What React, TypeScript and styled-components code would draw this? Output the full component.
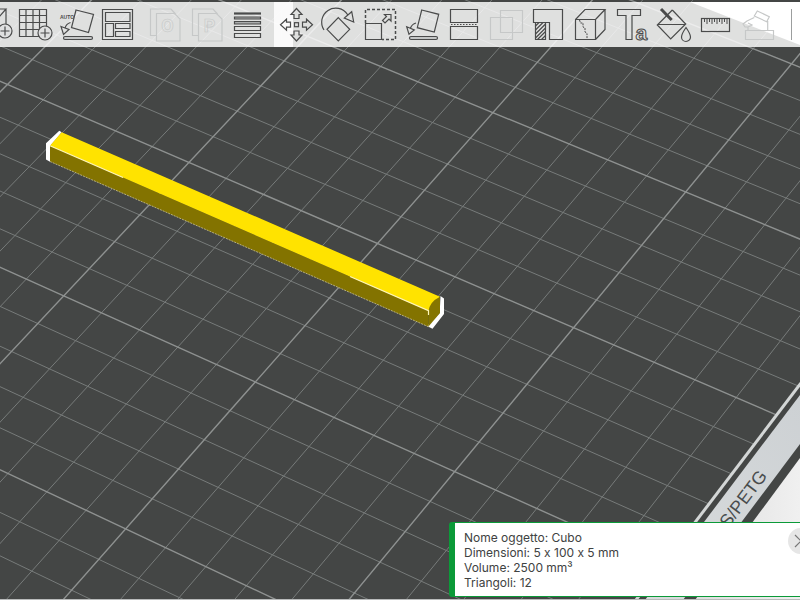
import React from "react";
import styled, { createGlobalStyle } from "styled-components";

const GlobalStyle = createGlobalStyle`
  *, *::before, *::after { box-sizing: border-box; }
  body {
    margin: 0;
    background: #444645;
    font-family: Inter, "Noto Sans", sans-serif;
    font-feature-settings: "calt" 0;
  }
`;

const Viewport = styled.main`
  position: relative;
  display: flex;
  flex-direction: column;
  justify-content: space-between;
  min-height: 100vh;
  padding: 2px 0 3px;
  overflow: hidden;
`;

const Scene = styled.svg`
  position: absolute;
  inset: 0;
  width: 100%;
  height: 100%;
`;

const Toolbars = styled.header`
  position: relative;
  display: flex;
  height: 45px;
`;

const Toolbar = styled.div<{ $side: "plate" | "object" }>`
  display: flex;
  align-items: center;
  flex: ${(p) => (p.$side === "plate" ? "0 0 293px" : "1 0 auto")};
  justify-content: ${(p) => (p.$side === "plate" ? "flex-end" : "flex-start")};
  min-width: 0;
  margin-right: ${(p) => (p.$side === "plate" ? "-19px" : "0")};
  padding: ${(p) => (p.$side === "plate" ? "0 11px 0 0" : "0 0 0 2px")};
  overflow: hidden;
  background: rgba(255, 255, 255, 0.83);
`;

const Tool = styled.button`
  flex: none;
  width: 42px;
  height: 45px;
  padding: 0;
  border: 0;
  background: none;
  color: #4a4b4b;
  cursor: pointer;

  &:disabled {
    color: #c6c8c8;
    cursor: default;
  }
`;

const Glyph = styled.svg`
  display: block;
  width: 42px;
  height: 45px;
  fill: none;
  stroke: currentColor;
  stroke-width: 1.2;
`;

const Separator = styled.span<{ $strong?: boolean }>`
  flex: none;
  width: 1px;
  height: 31px;
  margin-left: ${(p) => (p.$strong ? "11px" : "13px")};
  background: ${(p) => (p.$strong ? "#9c9e9e" : "#e2e3e3")};
`;

const InfoPanel = styled.aside`
  position: relative;
  display: flex;
  align-items: flex-start;
  align-self: flex-end;
  justify-content: space-between;
  width: 351px;
  max-width: 100%;
  padding: 7px 0 6px 9px;
  overflow: hidden;
  border: solid #0b9a38;
  border-width: 1px 0 1px 6px;
  border-radius: 3px 0 0 3px;
  background: #fff;
`;

const InfoList = styled.ul`
  margin: 0;
  padding: 0;
  list-style: none;
  color: #404242;
  font-size: 12px;
  line-height: 15px;
`;

const CloseButton = styled.button`
  flex: none;
  width: 26px;
  height: 26px;
  margin-right: -14px;
  margin-top: -2px;
  padding: 0;
  border: 0;
  border-radius: 50%;
  background: #e6e6e6;
  color: #777;
  cursor: pointer;

  svg {
    display: block;
    fill: none;
    stroke: currentColor;
    stroke-width: 1.2;
  }
`;

type Point = [number, number];

/* Perspective projection of the build plate; one unit is a major grid cell. */
const project = (a: number, b: number): Point => {
  const w = 1 - 0.0194 * a - 0.02855 * b;
  return [(377.5 + 184.9 * a - 129.5 * b) / w, (243.5 + 77.9 * a + 127.6 * b) / w];
};

const segment = (from: Point, to: Point) =>
  `M${from[0].toFixed(1)} ${from[1].toFixed(1)}L${to[0].toFixed(1)} ${to[1].toFixed(1)}`;

const buildGrid = () => {
  const minor: string[] = [];
  const major: string[] = [];
  for (let i = -25; i < 10; i++) {
    (i % 5 === 0 ? major : minor).push(segment(project(i / 5, -2.15), project(i / 5, 5)));
  }
  for (let i = -10; i <= 25; i++) {
    (i % 5 === 0 ? major : minor).push(segment(project(-5, i / 5), project(2, i / 5)));
  }
  return { minor: minor.join(""), major: major.join("") };
};

const grid = buildGrid();

const PlateScene = () => (
  <Scene viewBox="0 0 800 600" preserveAspectRatio="xMinYMin slice" aria-hidden="true">
    <defs>
      <linearGradient id="strip" x1="0" y1="1" x2="1" y2="0">
        <stop offset="0" stopColor="#d9dcdd" />
        <stop offset="1" stopColor="#cdd1d4" />
      </linearGradient>
      <linearGradient id="floor" x1="0" y1="0" x2="1" y2="0">
        <stop offset="0" stopColor="#dedede" />
        <stop offset="1" stopColor="#f0f0f0" />
      </linearGradient>
    </defs>
    <rect width="800" height="600" fill="#444645" />
    <path d={grid.minor} stroke="#777b7a" strokeWidth="1" fill="none" />
    <path d={grid.major} stroke="#8e9190" strokeWidth="1.4" fill="none" />
    <path d="M690 2L800 45V2z" fill="#fff" />
    <path d="M800 384L636 600H800z" fill="#444645" />
    <path d="M801 383L636 600" stroke="#d3d6d6" strokeWidth="3" />
    <path d="M800 395L645 600H683L800 444z" fill="url(#strip)" />
    <path d="M800 458L695 600H800z" fill="url(#floor)" />
    <text
      transform="translate(768 476) rotate(-53)"
      textAnchor="end"
      fontFamily="Liberation Sans, sans-serif"
      fontSize="18"
      fill="#494c4d"
    >
      ABS/PETG
    </text>
    <path d="M0 599.5H800" stroke="#b9bbbb" />

    <path d="M59.3 130.7L46 143.3V159.5L50 161.7V146L61.7 132.3z" fill="#fff" />
    <path d="M440.5 296L444 298.5V314L432.5 328.7L427 326L439.7 313z" fill="#fff" />
    <path d="M50 145.7L428.3 310.7V326.7L50 161.5z" fill="#837300" />
    <path d="M50 161.5L428.3 326.7" stroke="#d5d0a8" strokeWidth="0.7" strokeDasharray="2 1" />
    <path d="M61.7 132.3L440 296.7L428.3 310.7L50 145.7z" fill="#ffe300" />
    <path d="M440 296.7V313L428.3 326.7V312Q429 302 440 296.7z" fill="#857600" />
    <path d="M50 145.7L123 177.5M350 276.5L428.5 310.7V315" stroke="#fff6b8" strokeWidth="1.2" fill="none" />
  </Scene>
);

const Plus = ({ x, y }: { x: number; y: number }) => (
  <>
    <circle cx={x} cy={y} r="7" fill="#dfe0e0" />
    <path d={`M${x - 4.5} ${y}h9M${x} ${y - 4.5}v9`} />
  </>
);

const PageIcon = ({ letter }: { letter: string }) => (
  <>
    <path d="M14 33.5H8.5V7h20.5l4.5 5" />
    <path d="M14.5 11.5h18l5.5 5.5v22H14.5z" />
    <text
      x="25.5"
      y="30"
      textAnchor="middle"
      fontFamily="Roboto, sans-serif"
      fontSize="18"
      fontWeight="700"
      strokeWidth="0.6"
    >
      {letter}
    </text>
  </>
);

interface ToolDef {
  name: string;
  disabled?: boolean;
  icon: React.ReactNode;
}

const plateTools: ToolDef[] = [
  {
    name: "Aggiungi oggetto",
    icon: (
      <>
        <path d="M4 15h21v20H4zM4 15l7-8h21l-7 8M32 7v18" />
        <Plus x={31} y={29} />
      </>
    ),
  },
  {
    name: "Aggiungi piatto",
    icon: (
      <>
        <path d="M3.5 7.5h27v27h-27zM10 7.5v27M17 7.5v27M23.5 7.5v27M3.5 13.5h27M3.5 20.5h27M3.5 27.5h27" />
        <Plus x={29} y={31} />
      </>
    ),
  },
  {
    name: "Orientamento automatico",
    icon: (
      <>
        <path d="M18 8L35.5 12.5L30.5 30.5L13.5 25.5z" />
        <path d="M12.5 20.5Q8 22 7 26M3 24.5L11 27.5L5.5 32.5z" />
        <rect x="5.5" y="34.5" width="29" height="3" rx="1.5" fill="#c4c6c6" />
        <text
          x="2"
          y="17"
          fontFamily="Liberation Sans, sans-serif"
          fontSize="5"
          fontWeight="700"
          fill="currentColor"
          stroke="none"
        >
          AUTO
        </text>
      </>
    ),
  },
  {
    name: "Disponi",
    icon: (
      <path d="M2.5 7.5h30v30h-30zM5.5 10.5h24.5v9h-24.5zM5.5 21.5h8v13h-8zM15.5 21.5h14.5v5h-14.5zM15.5 29.5h14.5v5h-14.5z" />
    ),
  },
  { name: "Dividi in oggetti", disabled: true, icon: <PageIcon letter="O" /> },
  { name: "Dividi in parti", disabled: true, icon: <PageIcon letter="P" /> },
  {
    name: "Altezza layer variabile",
    icon: (
      <>
        <path d="M8 11.5h27" strokeWidth="2.2" />
        <path d="M8.5 15h26v2h-26zM8.5 19.5h26v2.5h-26z" fill="#aaacac" />
        <path d="M8.5 24.5h26v4h-26zM8.5 31.5h26v4h-26z" />
      </>
    ),
  },
];

const objectTools: ToolDef[] = [
  {
    name: "Sposta",
    icon: (
      <>
        <path d="M20.5 6.5l5.5 6h-3v4h-5v-4h-3zM20.5 39l5.5-6h-3v-4h-5v4h-3z" />
        <path d="M4.5 22.7l6-5.5v3h4v5h-4v3zM36.5 22.7l-6-5.5v3h-4v5h4v3z" />
        <rect x="18.5" y="20.7" width="4" height="4" />
      </>
    ),
  },
  {
    name: "Ruota",
    icon: (
      <path d="M20.3 15.7L31.7 27.3L20.3 39L9 27.3zM6 28A14 14 0 0 1 29.5 12.5M33.7 9.7L35.7 20L26.3 16z" />
    ),
  },
  {
    name: "Scala",
    icon: (
      <>
        <path d="M5.5 21V7.5h30v30H22" strokeDasharray="3 2" strokeWidth="1.5" />
        <path d="M5.5 21.5h16v16h-16zM24.5 12.5h6.5v6.5l-2-2-4 4-2.5-2.5 4-4z" />
      </>
    ),
  },
  {
    name: "Posiziona su faccia",
    icon: (
      <>
        <path d="M19.7 8L36.7 12.3L32.3 30L15.3 25.7z" />
        <path d="M14 21Q10 22 8.5 26M4.7 24.7L12.3 28L7 32.3z" />
        <rect x="7.5" y="34.5" width="28" height="3" rx="1.5" fill="#c4c6c6" />
      </>
    ),
  },
  {
    name: "Taglia",
    icon: (
      <>
        <path d="M6.5 7.5h27v13h-27zM6.5 24.5h27v13h-27z" />
        <path d="M7 22.5h27" strokeDasharray="1.5 1.5" />
      </>
    ),
  },
  {
    name: "Booleana mesh",
    disabled: true,
    icon: <path d="M4.5 15.5h22v22h-22zM14.5 8.5h22v22h-22z" />,
  },
  {
    name: "Dipingi supporti",
    icon: (
      <>
        <path d="M5.5 7.5h29v30h-13v-17h-16z" />
        <path d="M7.5 20.5h10v17h-10z" />
        <path d="M7.5 24l3.5-3.5M7.5 28l7.5-7.5M7.5 32l10-10M7.5 36l10-10M9.5 37.5l8-8M13.5 37.5l4-4" />
      </>
    ),
  },
  {
    name: "Dipingi cucitura",
    icon: (
      <>
        <path d="M5.5 17.5h20v20h-20zM5.5 17.5l9.5-10h20l-9.5 10M35 7.5v20l-9.5 10" />
        <path d="M9.5 18l1 3h2.5v4l2 1v4l2 1.5v5" strokeDasharray="2 1" strokeWidth="1" />
      </>
    ),
  },
  {
    name: "Testo",
    icon: (
      <>
        <path d="M5.5 7.5h23v6h-8.5v24h-6v-24h-8.5z" />
        <text x="23.5" y="37.5" fontFamily="Liberation Sans, sans-serif" fontSize="21" fontWeight="700" strokeWidth="1">
          a
        </text>
      </>
    ),
  },
  {
    name: "Dipingi colore",
    icon: (
      <>
        <path d="M18.3 8L31.7 22L16.7 37L3.3 23L18.3 8M3.3 22.5h28" />
        <path d="M7 7L17.7 18" strokeWidth="3" />
        <path d="M32 25.5Q27.5 32 27.5 35A4.5 4.5 0 0 0 36.5 35Q36.5 32 32 25.5z" />
      </>
    ),
  },
  {
    name: "Misura",
    icon: (
      <>
        <rect x="5.5" y="16.5" width="28" height="13" />
        <path d="M8.5 17v3M11 17v5M13.5 17v3M16 17v5M18.5 17v3M21 17v5M23.5 17v3M26 17v5M28.5 17v3M31 17v5" strokeWidth="1" />
      </>
    ),
  },
  {
    name: "Assemblaggio",
    disabled: true,
    icon: (
      <path d="M7.5 28.5h28v9h-28zM19.3 9L31.3 14.7L28.7 19.7L16.3 14zM16.3 15.5L9 19L5 22L7 25H10V28M28.7 19.7H29.7V28M10 21L14 23L10 25" />
    ),
  },
];

const ToolButton = ({ tool }: { tool: ToolDef }) => (
  <Tool type="button" aria-label={tool.name} disabled={tool.disabled}>
    <Glyph viewBox="0 0 42 45" aria-hidden="true">
      {tool.icon}
    </Glyph>
  </Tool>
);

const objectInfo = [
  "Nome oggetto: Cubo",
  "Dimensioni: 5 x 100 x 5 mm",
  "Volume: 2500 mm³",
  "Triangoli: 12",
];

export default function App() {
  return (
    <>
      <GlobalStyle />
      <Viewport>
        <PlateScene />
        <Toolbars>
          <Toolbar $side="plate" role="toolbar" aria-label="Piatto">
            {plateTools.map((tool) => (
              <ToolButton key={tool.name} tool={tool} />
            ))}
            <Separator />
          </Toolbar>
          <Toolbar $side="object" role="toolbar" aria-label="Oggetto">
            {objectTools.map((tool) => (
              <ToolButton key={tool.name} tool={tool} />
            ))}
            <Separator $strong />
          </Toolbar>
        </Toolbars>
        <InfoPanel>
          <InfoList>
            {objectInfo.map((line) => (
              <li key={line}>{line}</li>
            ))}
          </InfoList>
          <CloseButton type="button" aria-label="Chiudi">
            <svg width="26" height="26" viewBox="0 0 26 26" aria-hidden="true">
              <path d="M7 7L19 19M19 7L7 19" />
            </svg>
          </CloseButton>
        </InfoPanel>
      </Viewport>
    </>
  );
}
